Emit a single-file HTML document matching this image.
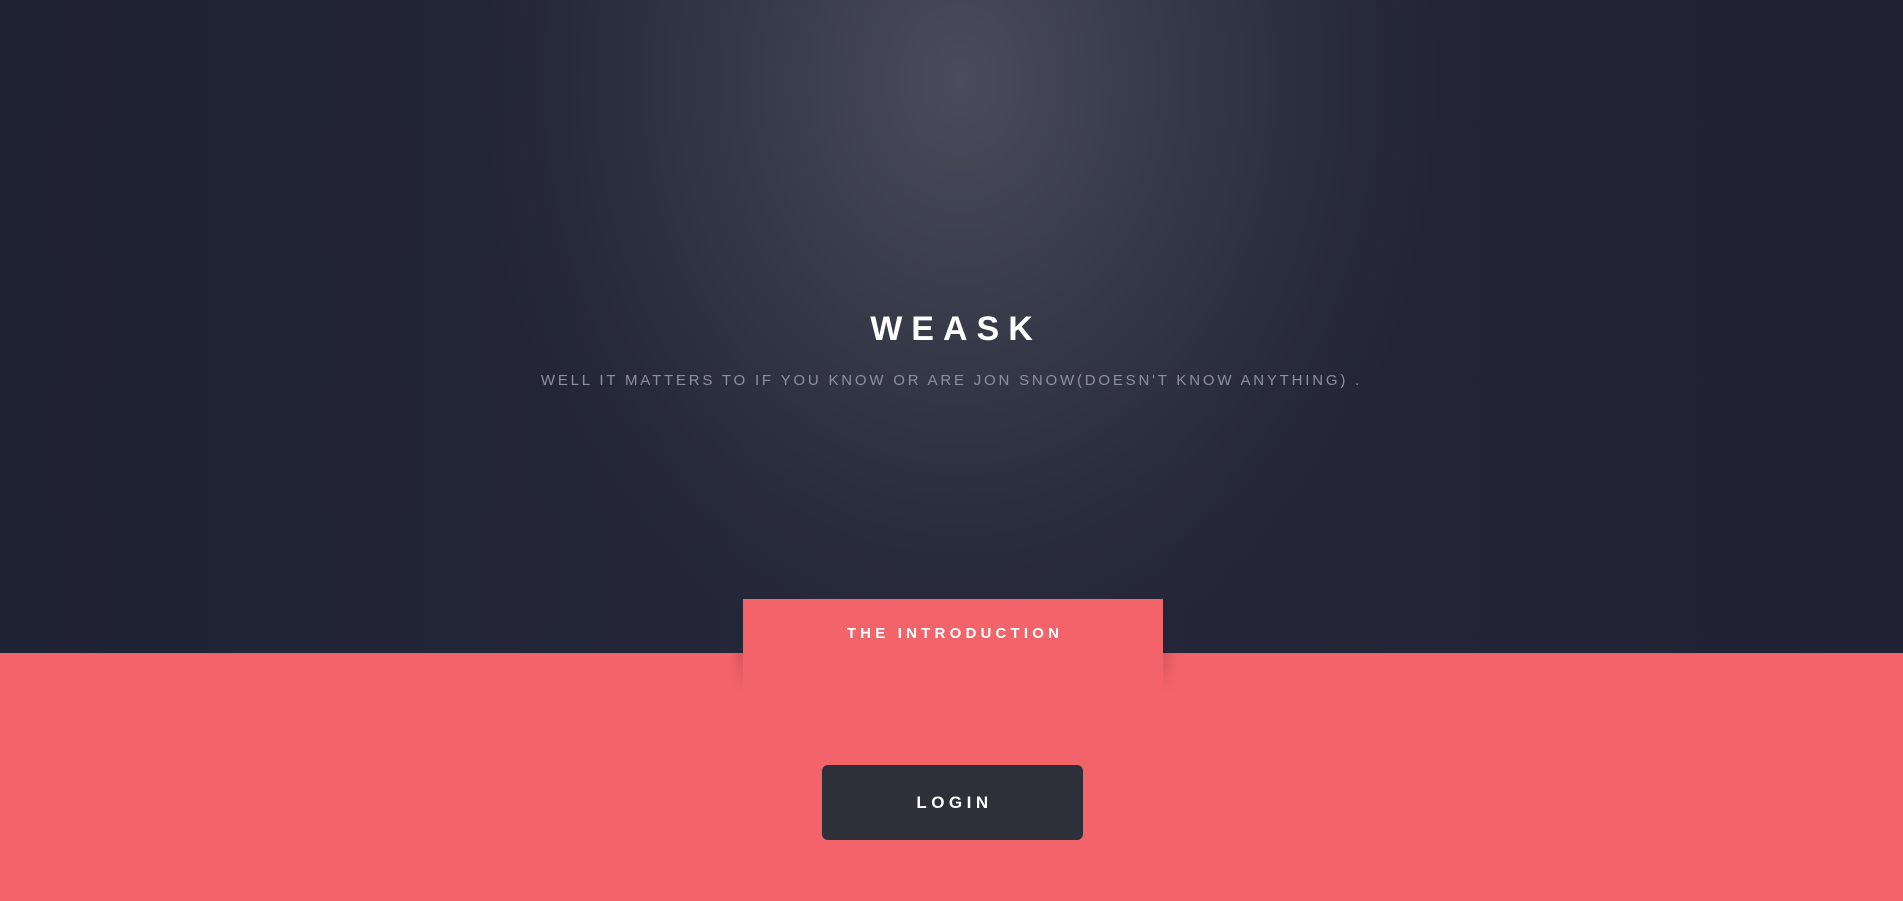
<!DOCTYPE html>
<html><head><meta charset="utf-8"><style>
html,body{margin:0;width:1903px;height:901px;overflow:hidden;font-family:"Liberation Sans",sans-serif}
.top{position:absolute;left:0;top:0;width:1903px;height:653px;background:radial-gradient(ellipse 480px 600px at 960px 80px,#4a4c5a 0%,#383b4a 40%,#282b3b 80%,#22243500 100%),linear-gradient(90deg,#1f2233,#262839 50%,#202233);}
.bot{position:absolute;left:0;top:653px;width:1903px;height:248px;background:#f2646a}
h1{position:absolute;top:307px;left:0;width:1903px;text-align:center;margin:0;color:#fff;font-size:34px;font-weight:bold;letter-spacing:9px;text-indent:9px;line-height:44px}
.sub{position:absolute;top:372px;left:0;width:1903px;text-align:center;color:#8f909b;font-size:15px;letter-spacing:2.8px;line-height:18px}
.tab{position:absolute;left:743px;top:599px;width:420px;height:75px;background:#f2646a;color:#fff;font-weight:bold;font-size:15px;letter-spacing:4.2px;text-align:center;line-height:70px;text-indent:4px}
.sh{position:absolute;top:653px;width:14px;height:40px}
.sl{left:729px;background:linear-gradient(90deg,rgba(0,0,0,0),rgba(0,0,0,.12));-webkit-mask:linear-gradient(#000,transparent)}
.sr{left:1163px;background:linear-gradient(270deg,rgba(0,0,0,0),rgba(0,0,0,.12));-webkit-mask:linear-gradient(#000,transparent)}
.login{position:absolute;left:822px;top:765px;width:261px;height:75px;background:#2d3039;border-radius:6px;color:#fff;font-weight:bold;font-size:17px;letter-spacing:4.5px;text-align:center;line-height:75px;text-indent:4px}
</style></head><body>
<div class="top"></div><div class="bot"></div>
<h1>WEASK</h1>
<div class="sub">WELL IT MATTERS TO IF YOU KNOW OR ARE JON SNOW(DOESN'T KNOW ANYTHING) .</div>
<div class="sh sl"></div><div class="sh sr"></div>
<div class="tab">THE INTRODUCTION</div>
<div class="login">LOGIN</div>
</body></html>
